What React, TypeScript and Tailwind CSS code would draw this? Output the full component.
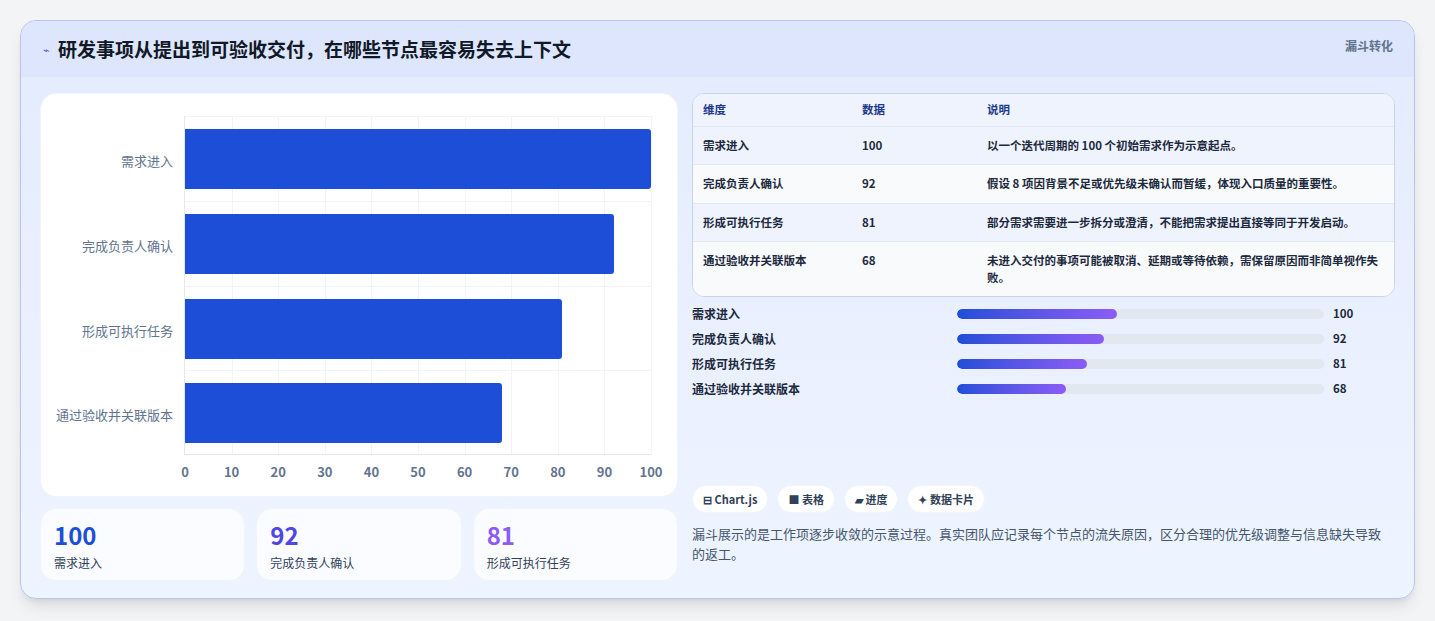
const font = { fontFamily: '"Noto Sans CJK SC", "Noto Sans", sans-serif' }

const rows = [
  { name: '需求进入', value: 100, note: '以一个迭代周期的 100 个初始需求作为示意起点。' },
  { name: '完成负责人确认', value: 92, note: '假设 8 项因背景不足或优先级未确认而暂缓，体现入口质量的重要性。' },
  { name: '形成可执行任务', value: 81, note: '部分需求需要进一步拆分或澄清，不能把需求提出直接等同于开发启动。' },
  { name: '通过验收并关联版本', value: 68, note: '未进入交付的事项可能被取消、延期或等待依赖，需保留原因而非简单视作失败。' },
]

const ticks = [0, 10, 20, 30, 40, 50, 60, 70, 80, 90, 100]

function Chart() {
  return (
    <div className="bg-white rounded-2xl border border-slate-100 h-[404px] relative">
      <div className="absolute left-[143px] top-[22px] w-[467px] h-[339px] border-l border-b border-slate-200">
        {ticks.slice(1).map((t) => (
          <div key={t} className="absolute top-0 bottom-0 border-l border-slate-100" style={{ left: `${t}%` }} />
        ))}
        {rows.map((r, i) => (
          <div key={r.name} className="absolute left-0 right-0 border-t border-slate-100" style={{ top: i * 84.75 }}>
            <div className="absolute left-0 top-[12px] h-[60px] bg-[#1d4ed8] rounded-r-[3px]" style={{ width: `${r.value}%` }} />
            <div className="absolute right-[478px] top-[34px] whitespace-nowrap text-[13px] text-slate-500">{r.name}</div>
          </div>
        ))}
        {ticks.map((t) => (
          <div key={t} className="absolute top-[346px] -translate-x-1/2 text-[13px] font-bold text-slate-500" style={{ left: `${t}%` }}>{t}</div>
        ))}
      </div>
    </div>
  )
}

function Stat({ v, label, color }: { v: number; label: string; color: string }) {
  return (
    <div className="flex-1 h-[73px] rounded-2xl border border-slate-100 bg-white/70 px-[13px] pt-[12px]">
      <div className={`text-[24px] font-bold leading-[28px] ${color}`}>{v}</div>
      <div className="text-[12px] text-slate-700 mt-[5px]">{label}</div>
    </div>
  )
}

export default function App() {
  return (
    <div className="w-[1435px] h-[621px] bg-[#f3f4f6] pt-[20px] pl-[20px]" style={font}>
      <div className="w-[1395px] h-[579px] rounded-2xl border border-[#b6c4ef] bg-gradient-to-b from-[#e4ebfd] to-[#eef4ff] overflow-hidden shadow-lg">
        <div className="h-[56px] bg-[#dde6fc] flex items-start justify-between pl-[22px] pr-[21px]">
          <div className="flex items-center gap-[8px] h-[56px]">
            <span className="text-[#3b5bdb] text-[11px]">⌁</span>
            <span className="text-[19px] font-bold text-[#111827]">研发事项从提出到可验收交付，在哪些节点最容易失去上下文</span>
          </div>
          <span className="text-[12px] font-bold text-slate-500 mt-[16px]">漏斗转化</span>
        </div>
        <div className="flex gap-[14px] pl-[19px] pr-[19px] pt-[16px]">
          <div className="w-[638px] flex flex-col gap-[11px]">
            <Chart />
            <div className="flex gap-[11px]">
              <Stat v={100} label="需求进入" color="text-[#1d4ed8]" />
              <Stat v={92} label="完成负责人确认" color="text-[#4f46e5]" />
              <Stat v={81} label="形成可执行任务" color="text-[#8b5cf6]" />
            </div>
          </div>
          <div className="flex-1 flex flex-col">
            <div className="rounded-xl border border-slate-300 bg-white overflow-hidden text-[11.5px]">
              <div className="flex h-[33px] items-center bg-[#eef3fd] border-b border-slate-200 font-bold text-[#1e3a8a]">
                <div className="w-[169px] pl-[10px]">维度</div>
                <div className="w-[125px]">数据</div>
                <div className="flex-1">说明</div>
              </div>
              {rows.map((r, i) => (
                <div key={r.name} className={`flex py-[10px] border-b last:border-b-0 border-slate-200 font-semibold text-slate-800 ${i % 2 ? 'bg-[#f8fafc]' : 'bg-[#eef3fd]'}`}>
                  <div className="w-[169px] pl-[10px]">{r.name}</div>
                  <div className="w-[125px]">{r.value}</div>
                  <div className="flex-1 pr-[16px] leading-[17px]">{r.note}</div>
                </div>
              ))}
            </div>
            <div className="mt-[8px] flex flex-col gap-[7px]">
              {rows.map((r) => (
                <div key={r.name} className="flex items-center h-[18px] text-[12px] font-semibold text-slate-800">
                  <div className="w-[265px]">{r.name}</div>
                  <div className="w-[367px] h-[10px] rounded-full bg-[#e2e8f0] overflow-hidden">
                    <div className="h-full rounded-full bg-gradient-to-r from-[#1d4ed8] to-[#8b5cf6]" style={{ width: `${r.value * 0.436}%` }} />
                  </div>
                  <div className="ml-[9px] text-[11.5px] font-bold">{r.value}</div>
                </div>
              ))}
            </div>
            <div className="mt-auto flex gap-[9px] text-[11px] font-bold text-slate-700">
              {['⊟ Chart.js', '■ 表格', '▰ 进度', '✦ 数据卡片'].map((c) => (
                <span key={c} className="h-[28px] px-[10px] flex items-center rounded-full bg-white border border-slate-100">{c}</span>
              ))}
            </div>
            <p className="mt-[11px] mb-[17px] text-[13px] leading-[20px] text-slate-600 pr-[14px]">
              漏斗展示的是工作项逐步收敛的示意过程。真实团队应记录每个节点的流失原因，区分合理的优先级调整与信息缺失导致的返工。
            </p>
          </div>
        </div>
      </div>
    </div>
  )
}
